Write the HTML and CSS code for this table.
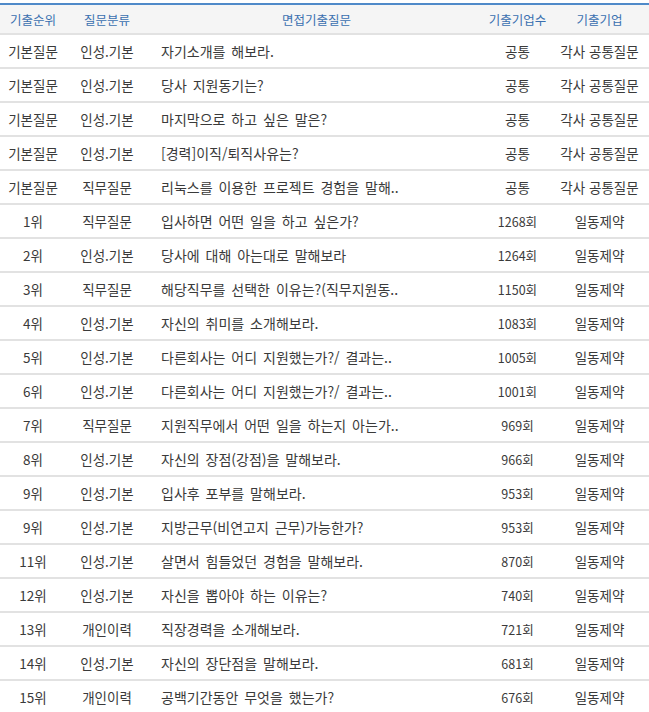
FILE: index.html
```html
<!DOCTYPE html>
<html lang="ko">
<head>
<meta charset="utf-8">
<link rel="stylesheet" href="styles.css">
</head>
<body>
<table class="qtable">
  <colgroup>
    <col class="c-rank"><col class="c-cat"><col class="c-q"><col class="c-cnt"><col class="c-co">
  </colgroup>
  <thead>
    <tr><th>기출순위</th><th>질문분류</th><th>면접기출질문</th><th>기출기업수</th><th>기출기업</th></tr>
  </thead>
  <tbody>
    <tr><td>기본질문</td><td>인성.기본</td><td class="q">자기소개를 해보라.</td><td>공통</td><td>각사 공통질문</td></tr>
    <tr><td>기본질문</td><td>인성.기본</td><td class="q">당사 지원동기는?</td><td>공통</td><td>각사 공통질문</td></tr>
    <tr><td>기본질문</td><td>인성.기본</td><td class="q">마지막으로 하고 싶은 말은?</td><td>공통</td><td>각사 공통질문</td></tr>
    <tr><td>기본질문</td><td>인성.기본</td><td class="q">[경력]이직/퇴직사유는?</td><td>공통</td><td>각사 공통질문</td></tr>
    <tr><td>기본질문</td><td>직무질문</td><td class="q">리눅스를 이용한 프로젝트 경험을 말해..</td><td>공통</td><td>각사 공통질문</td></tr>
    <tr><td>1위</td><td>직무질문</td><td class="q">입사하면 어떤 일을 하고 싶은가?</td><td class="n">1268회</td><td>일동제약</td></tr>
    <tr><td>2위</td><td>인성.기본</td><td class="q">당사에 대해 아는대로 말해보라</td><td class="n">1264회</td><td>일동제약</td></tr>
    <tr><td>3위</td><td>직무질문</td><td class="q">해당직무를 선택한 이유는?(직무지원동..</td><td class="n">1150회</td><td>일동제약</td></tr>
    <tr><td>4위</td><td>인성.기본</td><td class="q">자신의 취미를 소개해보라.</td><td class="n">1083회</td><td>일동제약</td></tr>
    <tr><td>5위</td><td>인성.기본</td><td class="q">다른회사는 어디 지원했는가?/ 결과는..</td><td class="n">1005회</td><td>일동제약</td></tr>
    <tr><td>6위</td><td>인성.기본</td><td class="q">다른회사는 어디 지원했는가?/ 결과는..</td><td class="n">1001회</td><td>일동제약</td></tr>
    <tr><td>7위</td><td>직무질문</td><td class="q">지원직무에서 어떤 일을 하는지 아는가..</td><td class="n">969회</td><td>일동제약</td></tr>
    <tr><td>8위</td><td>인성.기본</td><td class="q">자신의 장점(강점)을 말해보라.</td><td class="n">966회</td><td>일동제약</td></tr>
    <tr><td>9위</td><td>인성.기본</td><td class="q">입사후 포부를 말해보라.</td><td class="n">953회</td><td>일동제약</td></tr>
    <tr><td>9위</td><td>인성.기본</td><td class="q">지방근무(비연고지 근무)가능한가?</td><td class="n">953회</td><td>일동제약</td></tr>
    <tr><td>11위</td><td>인성.기본</td><td class="q">살면서 힘들었던 경험을 말해보라.</td><td class="n">870회</td><td>일동제약</td></tr>
    <tr><td>12위</td><td>인성.기본</td><td class="q">자신을 뽑아야 하는 이유는?</td><td class="n">740회</td><td>일동제약</td></tr>
    <tr><td>13위</td><td>개인이력</td><td class="q">직장경력을 소개해보라.</td><td class="n">721회</td><td>일동제약</td></tr>
    <tr><td>14위</td><td>인성.기본</td><td class="q">자신의 장단점을 말해보라.</td><td class="n">681회</td><td>일동제약</td></tr>
    <tr><td>15위</td><td>개인이력</td><td class="q">공백기간동안 무엇을 했는가?</td><td class="n">676회</td><td>일동제약</td></tr>
  </tbody>
</table>
</body>
</html>
```
FILE: styles.css
```css
html, body {
  margin: 0;
  padding: 0;
  background: #fff;
}
body {
  padding-top: 3px;
  font-family: "Noto Sans CJK KR", "Noto Sans", sans-serif;
  color: #3a3a3a;
}
.qtable {
  width: 649px;
  border-collapse: collapse;
  table-layout: fixed;
  border-top: 2px solid #4f8ac9;
}
.c-rank { width: 66px; }
.c-cat { width: 82px; }
.c-q { width: 337px; }
.c-cnt { width: 65px; }
.c-co { width: 99px; }
.qtable th {
  height: 28px;
  padding: 0;
  background: #f5f5f5;
  color: #3a70b0;
  font-weight: normal;
  font-size: 12.5px;
  text-align: center;
  border-bottom: 2px solid #e2e2e2;
}
.qtable td {
  height: 32px;
  padding: 0;
  font-size: 13.5px;
  text-align: center;
  white-space: nowrap;
  overflow: hidden;
  border-bottom: 2px solid #e2e2e2;
}
.qtable td.q {
  text-align: left;
  padding-left: 13px;
  font-size: 14px;
  word-spacing: 2px;
}
.qtable td.n {
  font-size: 12.5px;
}
```
